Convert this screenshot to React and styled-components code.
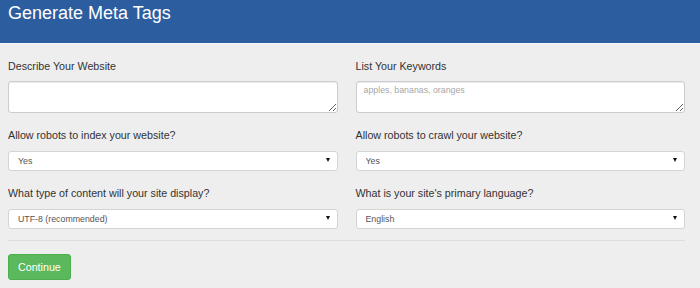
import React from 'react';
import styled, { createGlobalStyle } from 'styled-components';

const GlobalStyle = createGlobalStyle`
    html, body {
        margin: 0;
        padding: 0;
        background: #eeeeee;
        font-family: "Liberation Sans", Arial, sans-serif;
    }
`;

const fields = [
    { label: 'Describe Your Website', type: 'textarea', placeholder: '' },
    { label: 'List Your Keywords', type: 'textarea', placeholder: 'apples, bananas, oranges' },
    { label: 'Allow robots to index your website?', type: 'select', value: 'Yes' },
    { label: 'Allow robots to crawl your website?', type: 'select', value: 'Yes' },
    { label: 'What type of content will your site display?', type: 'select', value: 'UTF-8 (recommended)' },
    { label: "What is your site's primary language?", type: 'select', value: 'English' },
];

const App = () => {
    return (
        <Page>
            <GlobalStyle />
            <Banner>
                <Title>Generate Meta Tags</Title>
            </Banner>
            <Form>
                <Grid>
                    {fields.map((field, index) => (
                        <Field key={index}>
                            <Label>{field.label}</Label>
                            {field.type === 'textarea' ? (
                                <TextArea placeholder={field.placeholder} />
                            ) : (
                                <SelectWrap>
                                    <Select defaultValue={field.value}>
                                        <option>{field.value}</option>
                                    </Select>
                                    <Caret />
                                </SelectWrap>
                            )}
                        </Field>
                    ))}
                </Grid>
                <Divider />
                <Button>Continue</Button>
            </Form>
        </Page>
    );
};

const Page = styled.div`
    width: 700px;
    min-height: 288px;
`;

const Banner = styled.header`
    height: 43px;
    background-color: #2c5d9f;
    border-bottom: 1px solid #f7f7f7;
    padding: 0 8px;
    box-sizing: content-box;
`;

const Title = styled.h1`
    margin: 0;
    padding-top: 2px;
    color: #ffffff;
    font-size: 18px;
    font-weight: 400;
    line-height: 22px;
`;

const Form = styled.form`
    padding: 14px 15px 0 8px;
`;

const Grid = styled.div`
    display: grid;
    grid-template-columns: 1fr 1fr;
    column-gap: 18px;
    row-gap: 14px;
`;

const Field = styled.div`
    display: flex;
    flex-direction: column;
`;

const Label = styled.label`
    font-size: 10.7px;
    line-height: 16px;
    color: #333333;
    margin-bottom: 7px;
`;

const TextArea = styled.textarea`
    box-sizing: border-box;
    height: 32px;
    width: 100%;
    margin: 0;
    padding: 3px 7px;
    border: 1px solid #cccccc;
    border-radius: 3px;
    background: #ffffff;
    box-shadow: inset 0 1px 1px rgba(0, 0, 0, 0.075);
    font-family: "Liberation Sans", Arial, sans-serif;
    font-size: 8.8px;
    color: #555555;

    &::placeholder {
        color: #a8a8a8;
    }
`;

const SelectWrap = styled.div`
    position: relative;
`;

const Select = styled.select`
    appearance: none;
    box-sizing: border-box;
    width: 100%;
    height: 20px;
    margin: 0;
    padding: 0 9px;
    border: 1px solid #d4d4d4;
    border-radius: 3px;
    background: #ffffff;
    font-family: "Liberation Sans", Arial, sans-serif;
    font-size: 8.8px;
    color: #555555;
`;

const Caret = styled.span`
    position: absolute;
    right: 8px;
    top: 8px;
    width: 0;
    height: 0;
    border-left: 2.5px solid transparent;
    border-right: 2.5px solid transparent;
    border-top: 4px solid #111111;
    pointer-events: none;
`;

const Divider = styled.hr`
    margin: 11px 0 13px;
    border: 0;
    border-top: 1px solid #dddddd;
`;

const Button = styled.button`
    height: 26px;
    padding: 0 9px;
    border: 1px solid #4cae4c;
    border-radius: 3px;
    background-color: #5cb85c;
    color: #ffffff;
    font-family: "Liberation Sans", Arial, sans-serif;
    font-size: 10.7px;
`;

export default App;
